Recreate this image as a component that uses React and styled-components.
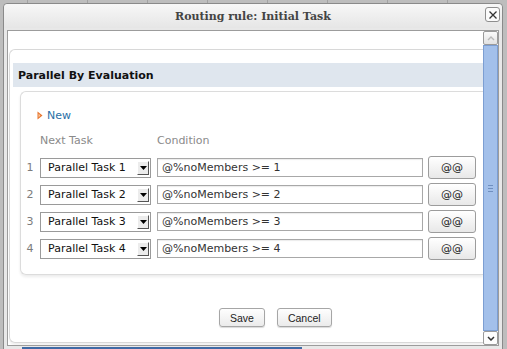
import React from "react";
import styled, { createGlobalStyle } from "styled-components";

const rows = [1, 2, 3, 4];

function App() {
  return (
    <>
      <GlobalStyle />
      <Page>
        <Dialog>
          <TitleBar>
            Routing rule: Initial Task
            <CloseButton>
              <svg width="10" height="10" viewBox="0 0 10 10">
                <path d="M1.5 1.5 L8.5 8.5 M8.5 1.5 L1.5 8.5" stroke="#333" strokeWidth="1.3" />
              </svg>
            </CloseButton>
          </TitleBar>
          <Content>
            <Main>
              <Panel>
                <PanelHeader>Parallel By Evaluation</PanelHeader>
                <InnerPanel>
                  <NewLink>
                    <svg width="6" height="9" viewBox="0 0 6 9">
                      <path d="M0.5 0.5 L5.5 4.5 L0.5 8.5 Z" fill="#e8742c" />
                      <path d="M1.5 2.5 L3.5 4.5 L1.5 6.5 Z" fill="#f7c8a0" />
                    </svg>
                    New
                  </NewLink>
                  <ColumnHeads>
                    <span>Next Task</span>
                    <span>Condition</span>
                  </ColumnHeads>
                  <RowList>
                    {rows.map((n) => (
                      <Row key={n}>
                        <RowNum>{n}</RowNum>
                        <Select>
                          <span>Parallel Task {n}</span>
                          <SelectArrow>
                            <svg width="7" height="4" viewBox="0 0 7 4">
                              <path d="M0 0 L7 0 L3.5 4 Z" fill="#000" />
                            </svg>
                          </SelectArrow>
                        </Select>
                        <Input>@%noMembers &gt;= {n}</Input>
                        <AtButton>@@</AtButton>
                      </Row>
                    ))}
                  </RowList>
                </InnerPanel>
                <Actions>
                  <Button>Save</Button>
                  <Button>Cancel</Button>
                </Actions>
              </Panel>
            </Main>
            <ScrollBar>
              <ScrollArrow>
                <svg width="8" height="5" viewBox="0 0 8 5">
                  <path d="M1 4 L4 1 L7 4" stroke="#b8b8b8" strokeWidth="1.4" fill="none" />
                </svg>
              </ScrollArrow>
              <Thumb>
                <Grip />
              </Thumb>
              <ScrollArrow $down>
                <svg width="8" height="5" viewBox="0 0 8 5">
                  <path d="M1 1 L4 4 L7 1" stroke="#333" strokeWidth="1.5" fill="none" />
                </svg>
              </ScrollArrow>
            </ScrollBar>
          </Content>
          <FooterLine />
        </Dialog>
      </Page>
    </>
  );
}

export default App;

const GlobalStyle = createGlobalStyle`
  html, body {
    margin: 0;
    padding: 0;
  }
  body {
    background-color: #bdbdbd;
    background-image: repeating-linear-gradient(
      90deg,
      transparent 0,
      transparent 27px,
      #a2a2a2 27px,
      #a2a2a2 28px,
      transparent 28px,
      transparent 60px
    );
    font-family: "DejaVu Sans", sans-serif;
  }
`;

const Page = styled.div`
  height: 349px;
  overflow: hidden;
  padding: 3px 0 0 3px;
  box-sizing: border-box;
`;

const Dialog = styled.div`
  width: 500px;
  height: 360px;
  box-sizing: border-box;
  background: #e8e8e8;
  border: 1px solid #8a8a8a;
  border-radius: 4px 4px 0 0;
`;

const TitleBar = styled.div`
  position: relative;
  height: 24px;
  display: flex;
  align-items: center;
  justify-content: center;
  background: linear-gradient(#f7f7f7, #e6e6e6);
  border-radius: 4px 4px 0 0;
  font-family: "DejaVu Serif", serif;
  font-weight: bold;
  font-size: 11px;
  color: #444;
`;

const CloseButton = styled.div`
  position: absolute;
  right: 2px;
  top: 3px;
  width: 13px;
  height: 13px;
  border: 1px solid #8e8e8e;
  border-radius: 3px;
  background: #fbfbfb;
  display: flex;
  align-items: center;
  justify-content: center;
`;

const Content = styled.div`
  margin: 2px 3px 0 3px;
  height: 316px;
  box-sizing: border-box;
  border: 1px solid #9c9c9c;
  background: #fff;
  display: flex;
`;

const Main = styled.div`
  flex: 1;
  overflow: hidden;
  padding: 18px 0 0 1px;
`;

const Panel = styled.div`
  height: 294px;
  box-sizing: border-box;
  border: 1px solid #d8d8d8;
  border-right: none;
  border-radius: 6px 0 0 6px;
  box-shadow: 0 2px 2px rgba(0, 0, 0, 0.06);
  padding: 13px 0 0 3px;
`;

const PanelHeader = styled.div`
  height: 24px;
  display: flex;
  align-items: center;
  padding-left: 5px;
  background: #dfe6ee;
  font-weight: bold;
  font-size: 11px;
  color: #111;
`;

const InnerPanel = styled.div`
  margin: 4px 0 0 7px;
  height: 184px;
  box-sizing: border-box;
  border: 1px solid #dcdcdc;
  border-right: none;
  border-radius: 6px 0 0 6px;
  box-shadow: 0 2px 3px rgba(0, 0, 0, 0.08);
  padding: 16px 0 0 3px;
`;

const NewLink = styled.div`
  display: flex;
  align-items: center;
  gap: 4px;
  margin-left: 13px;
  height: 14px;
  font-size: 11px;
  color: #2a6fa6;
`;

const ColumnHeads = styled.div`
  display: grid;
  grid-template-columns: 117px auto;
  margin: 12px 0 0 16px;
  height: 14px;
  font-size: 11px;
  line-height: 14px;
  color: #8a8a8a;
`;

const RowList = styled.div`
  margin-top: 6px;
`;

const Row = styled.div`
  display: flex;
  align-items: center;
  height: 27px;
`;

const RowNum = styled.span`
  width: 12px;
  margin-right: 4px;
  text-align: center;
  font-size: 11px;
  color: #7c7c7c;
`;

const Select = styled.div`
  width: 111px;
  height: 20px;
  box-sizing: border-box;
  border: 1px solid #9a9a9a;
  background: #fff;
  display: flex;
  align-items: center;
  justify-content: space-between;
  padding: 0 1px 0 7px;
  font-size: 11px;
  color: #111;
  margin-right: 6px;
`;

const SelectArrow = styled.span`
  width: 12px;
  height: 14px;
  box-sizing: border-box;
  background: #ececec;
  border-top: 1px solid #fff;
  border-left: 1px solid #fff;
  border-right: 1px solid #555;
  border-bottom: 1px solid #555;
  display: flex;
  align-items: center;
  justify-content: center;
`;

const Input = styled.div`
  width: 266px;
  height: 19px;
  box-sizing: border-box;
  border: 1px solid #a8a8a8;
  box-shadow: inset 0 1px 1px rgba(0, 0, 0, 0.08);
  display: flex;
  align-items: center;
  padding-left: 4px;
  font-size: 11px;
  color: #333;
  margin-right: 5px;
`;

const AtButton = styled.div`
  width: 48px;
  height: 23px;
  box-sizing: border-box;
  border: 1px solid #9c9c9c;
  border-radius: 3px;
  background: linear-gradient(#ffffff, #e8e8e8);
  display: flex;
  align-items: center;
  justify-content: center;
  font-size: 11px;
  color: #222;
`;

const Actions = styled.div`
  display: flex;
  gap: 12px;
  margin-top: 33px;
  padding-left: 206px;
`;

const Button = styled.div`
  height: 19px;
  box-sizing: border-box;
  padding: 0 10px;
  border: 1px solid #a6a6a6;
  border-radius: 3px;
  background: linear-gradient(#fefefe, #ebebeb);
  box-shadow: 0 1px 1px rgba(0, 0, 0, 0.15);
  display: flex;
  align-items: center;
  font-family: "Liberation Sans", Arial, sans-serif;
  font-size: 10.5px;
  color: #222;
`;

const ScrollBar = styled.div`
  width: 15px;
  display: flex;
  flex-direction: column;
`;

const ScrollArrow = styled.div`
  height: 14px;
  box-sizing: border-box;
  border: 1px solid #9a9a9a;
  border-radius: 2px;
  background: ${(p) => (p.$down ? "#fdfdfd" : "linear-gradient(#fafafa, #e2e2e2)")};
  display: flex;
  align-items: center;
  justify-content: center;
`;

const Thumb = styled.div`
  flex: 1;
  box-sizing: border-box;
  border: 1px solid #7c9ed2;
  background: #a3c0ea;
  display: flex;
  align-items: center;
  justify-content: center;
`;

const Grip = styled.div`
  width: 5px;
  height: 5px;
  border-top: 1px solid #6f8fbf;
  border-bottom: 1px solid #6f8fbf;
  background: linear-gradient(transparent 2px, #6f8fbf 2px, #6f8fbf 3px, transparent 3px);
`;

const FooterLine = styled.div`
  height: 2px;
  margin-top: 1px;
  background: linear-gradient(
    90deg,
    transparent 18px,
    #3f6aa5 18px,
    #3f6aa5 298px,
    transparent 298px
  );
`;
